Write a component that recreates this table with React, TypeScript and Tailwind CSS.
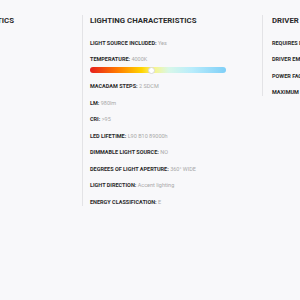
import React from "react";

const Row = ({ label, value }: { label: string; value: string }) => (
  <div className="leading-[6px] h-[6px] text-[5.5px] whitespace-nowrap">
    <span className="font-bold text-[#2a2a2a]">{label}:</span>{" "}
    <span className="text-[#a8a8a8]">{value}</span>
  </div>
);

export default function App() {
  return (
    <div
      className="w-[300px] h-[300px] overflow-hidden bg-[#f8f8fa]"
      style={{ fontFamily: "Roboto, 'Liberation Sans', sans-serif" }}
    >
      <div className="flex items-start mt-[15px] ml-[-98px]">
        <div className="w-[180px] shrink-0 border-l border-[#e3e3e6] pl-[9px]">
          <div className="flex justify-end pr-[68px] h-[11px]">
            <div className="shrink-0 text-[7.8px] leading-[11px] font-bold text-[#2a2a2a] whitespace-nowrap">
              TECHNICAL CHARACTERISTICS
            </div>
          </div>
        </div>
        <div className="w-[180px] shrink-0 border-l border-[#e3e3e6] pl-[7px] pb-[1px]">
          <div className="text-[7.8px] leading-[11px] font-bold text-[#2a2a2a] whitespace-nowrap">
            LIGHTING CHARACTERISTICS
          </div>
          <div className="flex flex-col gap-[10.5px] mt-[13.5px]">
            <Row label="LIGHT SOURCE INCLUDED" value="Yes" />
            <div>
              <Row label="TEMPERATURE" value="4000K" />
              <div
                className="relative mt-[5px] h-[6px] w-[136px] rounded-full"
                style={{
                  background:
                    "linear-gradient(to right, #e61e1e 0%, #ff7a00 20%, #ffd400 38%, #f8f58a 47%, #d8f7e8 58%, #b8ecfb 75%, #7fcff7 100%)",
                }}
              >
                <div className="absolute top-[-0.5px] left-[58px] w-[7px] h-[7px] rounded-full bg-white border border-[#d8d8d8]" />
              </div>
            </div>
            <div className="mt-[-0.5px]"><Row label="MACADAM STEPS" value="2 SDCM" /></div>
            <Row label="LM" value="980lm" />
            <Row label="CRI" value=">95" />
            <Row label="LED LIFETIME" value="L90 B10 89000h" />
            <Row label="DIMMABLE LIGHT SOURCE" value="NO" />
            <Row label="DEGREES OF LIGHT APERTURE" value="360° WIDE" />
            <Row label="LIGHT DIRECTION" value="Accent lighting" />
            <Row label="ENERGY CLASSIFICATION" value="E" />
          </div>
        </div>
        <div className="w-[180px] shrink-0 border-l border-[#e3e3e6] pl-[9px] pb-[1px]">
          <div className="text-[7.8px] leading-[11px] font-bold text-[#2a2a2a] whitespace-nowrap">
            DRIVER CHARACTERISTICS
          </div>
          <div className="flex flex-col gap-[10.5px] mt-[13.5px]">
            <Row label="REQUIRES DRIVER" value="Yes" />
            <Row label="DRIVER EMBEDDED" value="No" />
            <Row label="POWER FACTOR" value="0.9" />
            <Row label="MAXIMUM POWER" value="12W" />
          </div>
        </div>
      </div>
    </div>
  );
}
